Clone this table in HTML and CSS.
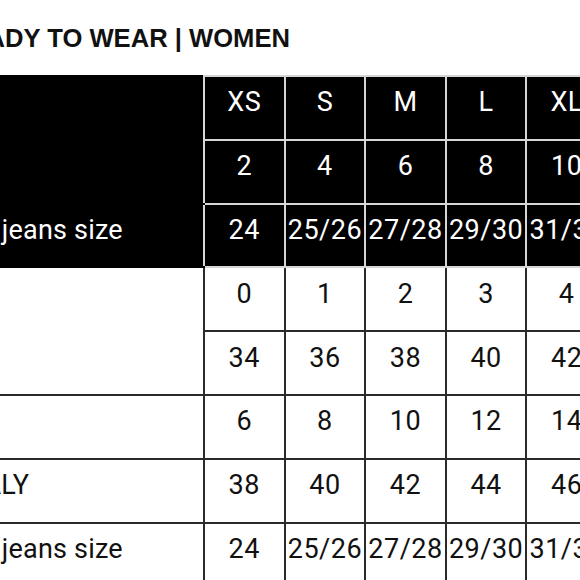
FILE: index.html
```html
<!DOCTYPE html>
<html lang="en">
<head>
<meta charset="utf-8">
<title>Size guide</title>
<link rel="stylesheet" href="styles.css">
</head>
<body>
<main class="guide">
  <h1 class="guide-title">READY TO WEAR | WOMEN</h1>
  <table class="size-table">
    <colgroup>
      <col class="col-label">
      <col class="col-size"><col class="col-size"><col class="col-size"><col class="col-size"><col class="col-size">
    </colgroup>
    <thead>
      <tr>
        <th class="label head-label" rowspan="2"></th>
        <th>XS</th><th>S</th><th>M</th><th>L</th><th>XL</th>
      </tr>
      <tr>
        <th>2</th><th>4</th><th>6</th><th>8</th><th>10</th>
      </tr>
      <tr>
        <th class="label head-label">US jeans size</th>
        <th>24</th><th>25/26</th><th>27/28</th><th>29/30</th><th>31/32</th>
      </tr>
    </thead>
    <tbody>
      <tr>
        <td class="label" rowspan="2">FR</td>
        <td>0</td><td>1</td><td>2</td><td>3</td><td>4</td>
      </tr>
      <tr>
        <td>34</td><td>36</td><td>38</td><td>40</td><td>42</td>
      </tr>
      <tr>
        <td class="label">UK</td>
        <td>6</td><td>8</td><td>10</td><td>12</td><td>14</td>
      </tr>
      <tr>
        <td class="label">ITALY</td>
        <td>38</td><td>40</td><td>42</td><td>44</td><td>46</td>
      </tr>
      <tr>
        <td class="label">US jeans size</td>
        <td>24</td><td>25/26</td><td>27/28</td><td>29/30</td><td>31/32</td>
      </tr>
    </tbody>
  </table>
</main>
</body>
</html>
```
FILE: styles.css
```css
html, body {
  margin: 0;
  padding: 0;
  overflow: hidden;
  background: #fff;
}

.guide {
  margin-left: -52px;
  font-family: Roboto, "Liberation Sans", sans-serif;
  color: #111;
}

.guide-title {
  margin: 0 0 21px 3px;
  padding-top: 22px;
  font-family: "Liberation Sans", Arial, sans-serif;
  font-size: 25.6px;
  line-height: 32px;
  font-weight: 700;
  white-space: nowrap;
}

.size-table {
  border-collapse: collapse;
  table-layout: fixed;
  width: 658px;
  font-size: 27px;
  letter-spacing: 0.5px;
}

.col-label { width: 255px; }
.col-size { width: 80.6px; }

.size-table tr { height: 63.8px; }

.size-table th,
.size-table td {
  padding: 0 0 11px;
  text-align: center;
  vertical-align: middle;
  white-space: nowrap;
  overflow: hidden;
  font-weight: 400;
}

.size-table th {
  background: #000;
  color: #fff;
  border: 2px solid #d6d6d6;
}

.size-table td {
  border: 2px solid #2a2a2a;
}

.size-table .label {
  text-align: left;
  padding-left: 11px;
  letter-spacing: 0.2px;
}

.size-table .head-label {
  border-top-color: #000;
  border-bottom-color: #000;
  border-left-color: #000;
}
```
